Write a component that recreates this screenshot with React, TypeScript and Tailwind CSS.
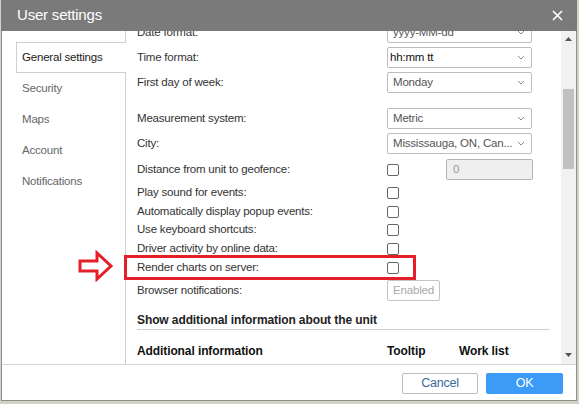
import React from 'react';

const tabs = ['General settings', 'Security', 'Maps', 'Account', 'Notifications'];

function Chevron() {
  return (
    <svg width="8" height="5" viewBox="0 0 8 5" className="shrink-0">
      <polyline points="1,1 4,4 7,1" fill="none" stroke="#888" strokeWidth="1" />
    </svg>
  );
}

function Select({ value, dark }: { value: string; dark?: boolean }) {
  return (
    <div className="w-[145px] h-[21px] border border-[#bdbdbd] rounded-[2px] bg-white flex items-center justify-between pr-[6px]">
      <span className={dark ? 'pl-[2px] text-[#111]' : 'pl-[5px] text-[#555]'}>{value}</span>
      <Chevron />
    </div>
  );
}

function Checkbox() {
  return <div className="w-[12px] h-[12px] border border-[#666] rounded-[2px] bg-white shrink-0" />;
}

function SelectRow({ label, value, dark, className = '' }: { label: string; value: string; dark?: boolean; className?: string }) {
  return (
    <div className={`flex items-center h-[21px] ${className}`}>
      <span className="w-[250px] text-[#333]">{label}</span>
      <Select value={value} dark={dark} />
    </div>
  );
}

function CheckRow({ label, h }: { label: string; h: string }) {
  return (
    <div className={`flex items-center ${h}`}>
      <span className="w-[250px] text-[#333]">{label}</span>
      <Checkbox />
    </div>
  );
}

export default function App() {
  return (
    <div className="relative w-[579px] h-[404px] overflow-hidden bg-[#d4d2c4] font-['Liberation_Sans',Arial,sans-serif] text-[11.5px] tracking-[-0.2px]">
      <div className="ml-[1px] w-[576px] h-[401px] bg-white border border-[#8e8e8e] flex flex-col">
        {/* Header */}
        <div className="h-[31px] -mt-px -mx-px bg-[#7a7a7a] flex items-center justify-between pl-[16px] pr-[14px] shrink-0">
          <span className="text-white text-[15px] tracking-[-0.2px]">User settings</span>
          <svg width="11" height="11" viewBox="0 0 11 11">
            <path d="M1 1L10 10M10 1L1 10" stroke="#fff" strokeWidth="1.6" />
          </svg>
        </div>

        {/* Body */}
        <div className="flex h-[334px] border-b border-[#d6d6d6] shrink-0">
          <div className="w-[124px] border-r border-[#cfcfcf] pt-[11px] shrink-0">
            {tabs.map((t, i) =>
              i === 0 ? (
                <div
                  key={t}
                  className="ml-[14px] -mr-px h-[31px] bg-white border border-r-0 border-[#cfcfcf] flex items-center pl-[5px] text-[#222] relative"
                >
                  {t}
                </div>
              ) : (
                <div key={t} className="h-[31px] flex items-center pl-[20px] text-[#666]">
                  {t}
                </div>
              )
            )}
          </div>

          <div className="w-[435px] overflow-hidden">
            <div className="-mt-[9px] pl-[11px]">
              <SelectRow label="Date format:" value="yyyy-MM-dd" />
              <SelectRow label="Time format:" value="hh:mm tt" dark className="mt-[4px]" />
              <SelectRow label="First day of week:" value="Monday" className="mt-[4px]" />
              <SelectRow label="Measurement system:" value="Metric" className="mt-[15px]" />
              <SelectRow label="City:" value="Mississauga, ON, Can..." className="mt-[4px]" />

              <div className="flex items-center h-[21px] mt-[5px]">
                <span className="w-[250px] text-[#333]">Distance from unit to geofence:</span>
                <Checkbox />
                <div className="ml-[47px] w-[87px] h-[21px] bg-[#efefef] border border-[#b5b5b5] rounded-[2px] flex items-center pl-[6px] text-[#999]">
                  0
                </div>
              </div>

              <div className="mt-[3px]">
                <CheckRow label="Play sound for events:" h="h-[19px]" />
                <CheckRow label="Automatically display popup events:" h="h-[19px]" />
                <CheckRow label="Use keyboard shortcuts:" h="h-[18px]" />
                <CheckRow label="Driver activity by online data:" h="h-[19px]" />
                <CheckRow label="Render charts on server:" h="h-[20px]" />
              </div>

              <div className="flex items-center h-[21px] mt-[2px]">
                <span className="w-[250px] text-[#333]">Browser notifications:</span>
                <div className="w-[53px] h-[21px] border border-[#c4c4c4] rounded-[2px] flex items-center justify-center text-[#aaa]">
                  Enabled
                </div>
              </div>

              <div className="mt-[9px] mr-[11px] h-[20px] border-b border-[#d0d0d0] flex items-center font-bold text-[12px] tracking-[-0.1px] text-[#222]">
                Show additional information about the unit
              </div>

              <div className="mt-[11px] h-[20px] flex items-center font-bold text-[12px] tracking-[-0.1px] text-[#111]">
                <span className="w-[250px]">Additional information</span>
                <span className="w-[72px]">Tooltip</span>
                <span>Work list</span>
              </div>
            </div>
          </div>

          {/* Scrollbar */}
          <div className="w-[15px] bg-[#f1f1f1] flex flex-col items-center shrink-0">
            <svg width="7" height="4" viewBox="0 0 7 4" className="mt-[6px]">
              <polygon points="0,4 3.5,0 7,4" fill="#555" />
            </svg>
            <div className="mt-[48px] w-[11px] h-[80px] bg-[#c1c1c1]" />
            <div className="flex-1" />
            <svg width="7" height="4" viewBox="0 0 7 4" className="mb-[7px]">
              <polygon points="0,0 3.5,4 7,0" fill="#555" />
            </svg>
          </div>
        </div>

        {/* Footer */}
        <div className="flex-1 flex items-start justify-end gap-[8px] pt-[8px] pr-[13px]">
          <button className="w-[76px] h-[21px] border border-[#bcbcbc] rounded-[2px] bg-white text-[#3b6a98] text-[12.5px]">
            Cancel
          </button>
          <button className="w-[77px] h-[21px] rounded-[2px] bg-[#3b9bf6] text-white text-[12.5px]">OK</button>
        </div>
      </div>

      {/* Annotation */}
      <div className="absolute left-[124px] top-[255px] w-[292px] h-[25px] border-[3px] border-[#e3202a]" />
      <svg className="absolute left-[78px] top-[250px]" width="36" height="32" viewBox="0 0 36 32">
        <path d="M2 11H19V3L33 16L19 29V21H2Z" fill="#fff" stroke="#e3202a" strokeWidth="3" strokeLinejoin="miter" />
      </svg>
    </div>
  );
}
